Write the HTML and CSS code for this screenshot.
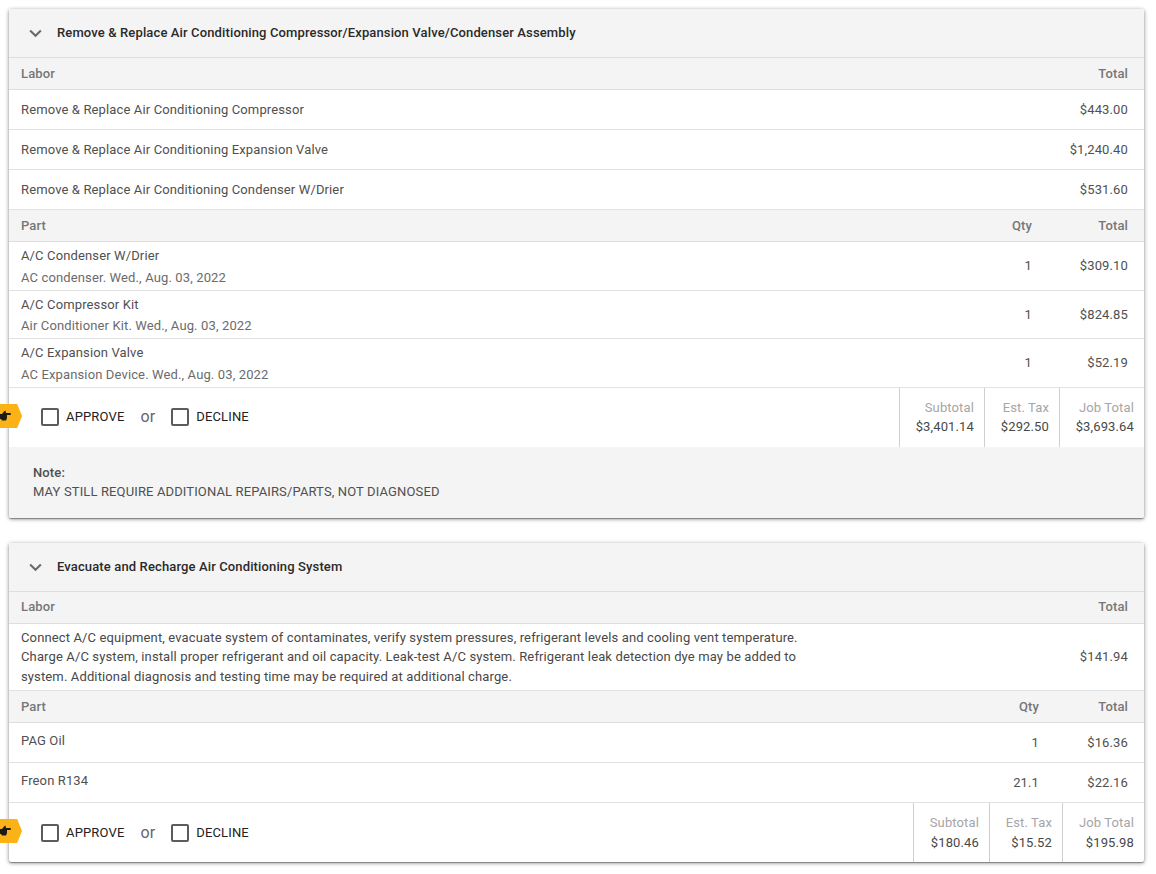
FILE: index.html
```html
<!DOCTYPE html>
<html lang="en">
<head>
<meta charset="utf-8">
<title>Estimate</title>
<link rel="stylesheet" href="styles.css">
</head>
<body>
<section class="card">
  <header class="head">
    <svg class="chev" viewBox="0 0 14 9"><path d="M1.200 1.200 7 7l5.800-5.800" fill="none" stroke="#6a6a6a" stroke-width="2.200"/></svg>
    <h2>Remove &amp; Replace Air Conditioning Compressor/Expansion Valve/Condenser Assembly</h2>
  </header>
  <div class="row sub"><span class="grow">Labor</span><span class="total">Total</span></div>
  <div class="row labor"><span class="grow">Remove &amp; Replace Air Conditioning Compressor</span><span class="total">$443.00</span></div>
  <div class="row labor"><span class="grow">Remove &amp; Replace Air Conditioning Expansion Valve</span><span class="total">$1,240.40</span></div>
  <div class="row labor"><span class="grow">Remove &amp; Replace Air Conditioning Condenser W/Drier</span><span class="total">$531.60</span></div>
  <div class="row sub"><span class="grow">Part</span><span class="qty">Qty</span><span class="total">Total</span></div>
  <div class="row part"><div class="grow info"><div>A/C Condenser W/Drier</div><div class="desc">AC condenser. Wed., Aug. 03, 2022</div></div><span class="qty">1</span><span class="total">$309.10</span></div>
  <div class="row part short"><div class="grow info"><div>A/C Compressor Kit</div><div class="desc">Air Conditioner Kit. Wed., Aug. 03, 2022</div></div><span class="qty">1</span><span class="total">$824.85</span></div>
  <div class="row part"><div class="grow info"><div>A/C Expansion Valve</div><div class="desc">AC Expansion Device. Wed., Aug. 03, 2022</div></div><span class="qty">1</span><span class="total">$52.19</span></div>
  <div class="actions compact">
    <div class="badge"><svg viewBox="0 0 11 12"><path d="M0 4h2l2-2.500 1.500-1 .5 2.500h4a1 1 0 0 1 0 2H7v3l-1 2.500H2L1 9H0z" fill="#1c1a16"/></svg></div>
    <div class="choice">
      <label class="check"><span class="box"></span>APPROVE</label>
      <span class="or">or</span>
      <label class="check"><span class="box"></span>DECLINE</label>
    </div>
    <div class="sum w85"><span>Subtotal</span><b>$3,401.14</b></div>
    <div class="sum w75"><span>Est. Tax</span><b>$292.50</b></div>
    <div class="sum w85"><span>Job Total</span><b>$3,693.64</b></div>
  </div>
  <div class="note"><strong>Note:</strong><p>MAY STILL REQUIRE ADDITIONAL REPAIRS/PARTS, NOT DIAGNOSED</p></div>
</section>

<section class="card">
  <header class="head">
    <svg class="chev" viewBox="0 0 14 9"><path d="M1.200 1.200 7 7l5.800-5.800" fill="none" stroke="#6a6a6a" stroke-width="2.200"/></svg>
    <h2>Evacuate and Recharge Air Conditioning System</h2>
  </header>
  <div class="row sub raised"><span class="grow">Labor</span><span class="total">Total</span></div>
  <div class="row long"><div class="grow"><p class="para">Connect A/C equipment, evacuate system of contaminates, verify system pressures, refrigerant levels and cooling vent temperature. Charge A/C system, install proper refrigerant and oil capacity. Leak-test A/C system. Refrigerant leak detection dye may be added to system. Additional diagnosis and testing time may be required at additional charge.</p></div><span class="total">$141.94</span></div>
  <div class="row sub"><span class="grow">Part</span><span class="qty wide">Qty</span><span class="total">Total</span></div>
  <div class="row labor top"><span class="grow">PAG Oil</span><span class="qty wide">1</span><span class="total">$16.36</span></div>
  <div class="row labor top"><span class="grow">Freon R134</span><span class="qty wide">21.1</span><span class="total">$22.16</span></div>
  <div class="actions">
    <div class="badge"><svg viewBox="0 0 11 12"><path d="M0 4h2l2-2.500 1.500-1 .5 2.500h4a1 1 0 0 1 0 2H7v3l-1 2.500H2L1 9H0z" fill="#1c1a16"/></svg></div>
    <div class="choice">
      <label class="check"><span class="box"></span>APPROVE</label>
      <span class="or">or</span>
      <label class="check"><span class="box"></span>DECLINE</label>
    </div>
    <div class="sum w76"><span>Subtotal</span><b>$180.46</b></div>
    <div class="sum w73"><span>Est. Tax</span><b>$15.52</b></div>
    <div class="sum w82"><span>Job Total</span><b>$195.98</b></div>
  </div>
</section>
</body>
</html>
```
FILE: styles.css
```css
* { box-sizing: border-box; }
html, body { margin: 0; padding: 0; background: #fff; }
body {
  padding: 9px 12px 0 9px;
  font-family: Roboto, "Liberation Sans", sans-serif;
  font-size: 13px;
  line-height: 20px;
  color: #505050;
  letter-spacing: 0.13px;
  overflow: hidden;
}
.card {
  background: #fff;
  border-radius: 2px;
  box-shadow: 0 1px 4px rgba(0,0,0,.45), 0 1px 1px rgba(0,0,0,.3);
  margin-bottom: 25px;
}
.head {
  height: 49px;
  display: flex;
  align-items: center;
  background: #f4f4f4;
  border-bottom: 1px solid #dedede;
  padding-left: 20px;
}
.chev { width: 13px; height: 9px; margin-right: 15px; }
h2 { margin: 0; font-size: 13px; font-weight: 500; color: #2a2a2a; letter-spacing: 0.13px; }
.row {
  display: flex;
  align-items: center;
  padding: 0 16px 0 12px;
  border-bottom: 1px solid #e2e2e2;
}
.grow { flex: 1; min-width: 0; }
.total { width: 90px; text-align: right; }
.qty { width: 40px; margin-right: 6px; text-align: right; }
.qty.wide { margin-right: -1px; }
.sub { height: 32px; background: #f4f4f4; color: #777; font-weight: 500; border-color: #dedede; }
.sub.raised { padding-bottom: 2px; }
.labor { height: 40px; }
.labor.top { align-items: flex-start; padding-top: 8px; }
.labor.top .qty, .labor.top .total { margin-top: 2px; }
.part { height: 49px; }
.part.short { height: 48px; }
.info { align-self: flex-start; padding-top: 4px; }
.desc { color: #6b6b6b; margin-top: 2px; }
.short .desc { margin-top: 1px; }
.long { height: 67px; }
.para { margin: 0; max-width: 790px; line-height: 19.500px; color: #484848; }
.actions { height: 59px; display: flex; position: relative; }
.compact .choice { padding-bottom: 2px; }
.compact .sum { padding-bottom: 1px; }
.compact .sum b { margin-top: -1px; }
.badge {
  position: absolute;
  left: -9px;
  top: 16px;
  width: 22px;
  height: 24px;
  background: #fbb216;
  clip-path: polygon(0 0, 78% 0, 100% 50%, 78% 100%, 0 100%);
  display: flex;
  align-items: center;
}
.badge svg { width: 11px; height: 12px; }
.choice { flex: 1; display: flex; align-items: center; padding-left: 32px; color: #222; }
.check { display: flex; align-items: center; gap: 7px; font-size: 13px; letter-spacing: 0.15px; }
.box { width: 18px; height: 18px; border: 2px solid #5c5c5c; border-radius: 2px; background: #fff; }
.or { font-size: 16px; color: #666; margin: 0 16px; }
.sum { display: flex; flex-direction: column; align-items: flex-end; justify-content: center; border-left: 1px solid #cfcfcf; padding-right: 10px; }
.sum span { color: #a6a6a6; }
.sum b { font-weight: 400; color: #484848; }
.w85 { width: 85px; }
.w75 { width: 75px; }
.w76 { width: 76px; }
.w73 { width: 73px; }
.w82 { width: 82px; }
.note { background: #f4f4f4; height: 71px; padding: 16px 24px 0; line-height: 19px; border-radius: 0 0 2px 2px; }
.note strong { font-weight: 500; }
.note p { margin: 0; }
```
